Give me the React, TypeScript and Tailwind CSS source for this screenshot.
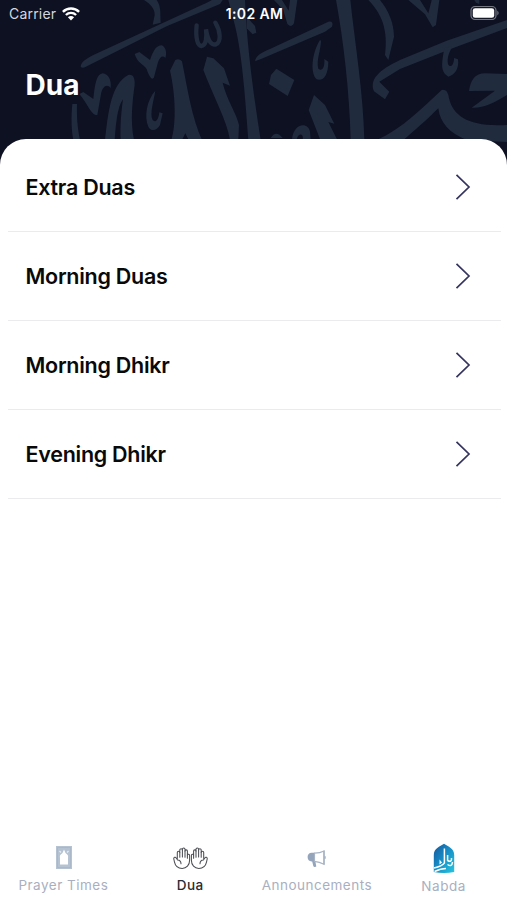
import React from "react";

const INK = "#202b3d";

function Calligraphy() {
  return (
    <svg className="absolute inset-0 h-full w-full" viewBox="0 0 1521 504" fill={INK} aria-hidden="true">
      <path d="M242 200C242 188 256 177 280 165L620 8L636 0H668L660 12L500 79L262 198Q248 207 242 200Z" />
      <path d="M432 0C450 12 465 25 464 45L458 74L482 68C480 40 484 20 470 0Z" />
      <path d="M404 162L418 156L450 180C460 150 470 136 485 136C497 140 502 160 496 174C488 165 480 170 474 187L462 232C456 245 445 225 440 207C430 192 412 190 404 162Z" />
      <path d="M466 272C440 300 432 350 445 380C452 395 470 394 480 375L488 340L478 337C475 360 468 370 458 360C448 340 462 300 466 272Z" />
      <path d="M238 282L250 276L280 297C285 250 290 222 308 220C325 222 335 240 332 264C320 250 308 260 303 282L292 345C275 348 262 310 238 282Z" />
      <path d="M217 312L231 312C230 350 232 380 240 420L220 420C214 390 213 350 217 312Z" />
      <path d="M315 420C325 330 335 250 385 225C400 222 405 235 404 255C398 300 390 360 402 420L362 420C360 380 364 330 369 298C352 320 348 370 344 420Z" />
      <path d="M510 212L526 180Q537 174 546 184C565 280 575 350 606 420L566 420L556 400L546 420L514 420C530 370 526 280 510 212Z" />
      <path d="M610 210L621 170L640 175L672 205L690 257L668 248C680 300 710 340 717 375L715 420L690 420C680 360 640 290 610 210Z" />
      <path d="M590 76C586 112 592 136 604 138C620 136 620 106 618 88C624 124 634 136 648 133C664 126 662 94 646 68" fill="none" stroke={INK} strokeWidth="13" strokeLinecap="round" />
      <path d="M685 0H735C740 130 760 280 782 420H745C735 280 725 150 702 65Z" />
      <path d="M740 50L765 78L769 98L758 103L740 85Z" />
      <path d="M765 184C768 165 790 155 810 147L985 65Q1002 62 996 80L975 95L785 176Z" />
      <path d="M829 206L883 240L863 288L807 252L813 225Z" />
      <path d="M822 0L850 30L862 72Q875 85 882 70L892 0H870L866 32L846 0Z" />
      <path d="M960 120C935 160 930 220 950 238C970 245 985 225 985 185L973 177C975 205 965 215 955 206C948 180 963 150 963 122Z" />
      <path d="M942 285L975 315L1003 371L985 366L1012 420H961L926 330Z" />
      <path d="M876 416C882 368 925 365 930 395L932 420H908C912 402 897 396 890 417ZM812 414Q828 388 848 414Z" />
      <path d="M1008 0H1051C1065 130 1090 280 1093 420H1052C1048 270 1030 120 1008 0Z" />
      <path d="M1105 0H1140C1165 30 1182 70 1182 110L1165 180L1155 165C1165 90 1145 40 1105 0Z" />
      <path d="M1225 0H1260L1285 40L1295 0H1318L1308 75L1298 82L1275 43Z" />
      <path d="M1423 0H1438V12L1428 8Z" />
      <path d="M1521 60V84L1350 148L1200 207L1138 245L1168 275L1155 298L1122 274C1108 240 1135 210 1200 180L1340 122Z" />
      <path d="M1333 145C1325 190 1320 215 1345 230C1365 225 1378 205 1374 178L1362 174C1362 197 1350 205 1344 192C1340 170 1350 155 1357 138Z" />
      <path d="M1130 420C1210 385 1270 320 1325 270Q1343 266 1347 295C1360 350 1410 382 1521 375V426L1400 420C1350 400 1320 370 1315 325C1280 360 1240 395 1210 420Z" />
      <path d="M1407 273C1412 240 1425 220 1455 220L1521 222V285C1480 310 1450 325 1415 323L1485 272Z" />
    </svg>
  );
}

function StatusBar() {
  return (
    <div className="relative grid h-7 grid-cols-3 items-center pl-[9px] pr-[7px] text-white">
      <div className="-mt-px flex items-center gap-[6px]">
        <span className="text-[14px] tracking-[0.2px] text-[#d5d7dc]">Carrier</span>
        <svg width="18" height="14" viewBox="0 0 18 14" fill="none" stroke="white" strokeWidth="2.4">
          <path d="M.9 4.8C5.4.4 12.6.4 17.1 4.8M3.9 8C6.8 5.2 11.2 5.2 14.1 8" />
          <path d="M5.9 10.2Q9 7.8 12.1 10.2L9 13.4Z" fill="white" stroke="none" />
        </svg>
      </div>
      <span className="-mt-[2px] whitespace-nowrap text-center text-[14px] font-semibold tracking-[0.35px]">1:02 AM</span>
      <svg className="-mt-[2px] justify-self-end" width="30" height="16" viewBox="0 0 30 16">
        <rect x="1" y="1.5" width="25" height="13" rx="4" fill="#151827" stroke="#747680" strokeWidth="1.2" />
        <rect x="2.8" y="3.2" width="21.4" height="9.6" rx="2.3" fill="white" />
        <path d="M27.3 5.5Q30 8 27.3 10.5Z" fill="#747680" />
      </svg>
    </div>
  );
}

function DuaRow({ title }: { title: string }) {
  return (
    <li className="flex h-[89.1px] items-center justify-between border-b border-[#ebebed] pl-[17.5px] pr-[30px]">
      <span className="pt-[1px] text-[21.5px] font-semibold tracking-[-0.27px] text-[#090909]">{title}</span>
      <svg width="16" height="28" viewBox="0 0 16 28" fill="none" stroke="#34345f" strokeWidth="1.7">
        <path d="M1.5 1.8L14 14L1.5 26.2" />
      </svg>
    </li>
  );
}

function RugIcon() {
  return (
    <svg className="ml-[2px]" width="16" height="23" viewBox="0 0 16 23">
      <rect width="16" height="23" fill="#b5c2d2" />
      <path d="M1.5 1.5H14.5V21.5H1.5Z" fill="none" stroke="#a7b5c7" strokeWidth=".8" />
      <path d="M8 3.5L9.5 7C12 8.5 12.4 10 12 12V18.5H4V12C3.6 10 4 8.5 6.5 7Z" fill="white" />
      <path d="M3.5 5L5 6.5M12.5 5L11 6.5" stroke="#e9eef3" strokeWidth="1.2" />
    </svg>
  );
}

function HandsIcon() {
  return (
    <svg className="mt-[2px]" width="35" height="23" viewBox="0 0 35 23" fill="none" stroke="#4c4e54" strokeWidth="1.05" strokeLinecap="round" strokeLinejoin="round">
      <g id="hand">
        <path d="M4.3 11.5V5.4C4.3 3.8 6.8 3.8 6.8 5.4V3C6.8 1.4 9.4 1.4 9.4 3V2.2C9.4.7 12 .7 12 2.2V3.9C12 2.5 14.4 2.5 14.4 3.9V8C14.8 6.8 16.6 7 16.6 8.6V13.2C16.6 18.2 13.4 21.4 9.2 21.4C5.2 21.4 2.3 19 1.5 15.2L.8 12C.5 10.2 2.4 9.6 3.2 11L4.6 13C6.8 13.1 8 14.6 8 16.8" />
        <path d="M6.8 5.4V10.3M9.4 3V10M12 3.9V10.3M14.4 8V11.3" />
      </g>
      <use href="#hand" transform="translate(35 0) scale(-1 1)" />
    </svg>
  );
}

function MegaphoneIcon() {
  return (
    <svg className="mt-[3px]" width="19" height="18" viewBox="0 0 19 18">
      <path d="M7.8 2.8H4.6C2.1 2.8.6 4.5.6 7.1S2.1 11.4 4.6 11.4H5.2L6.3 16Q6.8 17.3 8 17L9.3 16.4L8.4 11.4Z" fill="#94a5bb" />
      <path d="M7.5 3.2C11.5 3.1 14.6 2.3 17 1V14.2C14.6 12.9 11.5 11.6 7.5 11.3Z" fill="white" stroke="#a8b4c5" strokeWidth="1.2" />
      <path d="M17 .8V14.6M18 6.2V8.8" fill="none" stroke="#a8b4c5" strokeWidth="1.5" />
    </svg>
  );
}

function NabdaIcon() {
  return (
    <svg className="mt-[2px]" width="22" height="31" viewBox="0 0 22 31">
      <defs>
        <linearGradient id="nabda" x1="0" y1="0" x2="1" y2="1">
          <stop offset="0" stopColor="#16549b" />
          <stop offset=".45" stopColor="#168bc4" />
          <stop offset="1" stopColor="#25c7df" />
        </linearGradient>
      </defs>
      <path d="M.8 29V12C.8 5.5 6.8 3.4 11 .8C15.2 3.4 21.2 5.5 21.2 12V29Q11 31 .8 29Z" fill="url(#nabda)" />
      <path d="M11.4 5.5V20Q9 23.2 1 25M14.6 12V17.5Q19 20 18.5 15M14.5 21.5Q19 24.5 19.5 19M1.5 28.5Q8 25.5 13 25.5" fill="none" stroke="white" strokeWidth="1.5" />
      <path d="M6.5 16.5L9 19.5L6.5 21.5Z" fill="white" />
    </svg>
  );
}

function Tab({ label, icon, active = false, spacing, drop = false }: { label: string; icon: React.ReactNode; active?: boolean; spacing: string; drop?: boolean }) {
  return (
    <div className="flex flex-1 flex-col items-center">
      <div className="flex h-8 items-center justify-center">{icon}</div>
      <span className={`whitespace-nowrap text-[13.5px] leading-[20px] ${spacing} ${drop ? "mt-[3px]" : "mt-[2px]"} ${active ? "font-medium text-[#292b30]" : "text-[#a9afbf]"}`}>
        {label}
      </span>
    </div>
  );
}

const duas = ["Extra Duas", "Morning Duas", "Morning Dhikr", "Evening Dhikr"];

export default function App() {
  return (
    <div className="flex h-[900px] w-[507px] flex-col overflow-hidden bg-white font-['Inter','Liberation_Sans',sans-serif]">
      <header className="relative h-[168px] shrink-0 overflow-hidden bg-[#0d1121]">
        <Calligraphy />
        <StatusBar />
        <h1 className="relative mt-[39px] pl-[25.5px] text-[28px] font-bold leading-[36px] tracking-[0px] text-white">Dua</h1>
      </header>
      <main className="relative -mt-[29px] flex-1 rounded-t-[26px] bg-white pl-2 pr-[6px] pt-[3.5px]">
        <ul>
          {duas.map((title) => (
            <DuaRow key={title} title={title} />
          ))}
        </ul>
      </main>
      <nav className="flex h-[60px] shrink-0 bg-white pt-[1px]">
        <Tab label="Prayer Times" icon={<RugIcon />} spacing="tracking-[0.5px]" />
        <Tab label="Dua" icon={<HandsIcon />} active spacing="tracking-[0.4px]" />
        <Tab label="Announcements" icon={<MegaphoneIcon />} spacing="tracking-[0.5px]" />
        <Tab label="Nabda" icon={<NabdaIcon />} spacing="tracking-[0.6px]" drop />
      </nav>
    </div>
  );
}
